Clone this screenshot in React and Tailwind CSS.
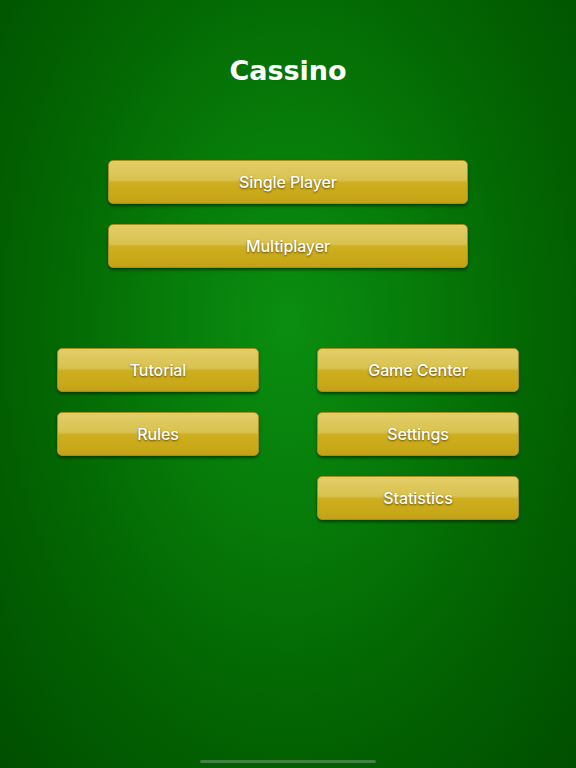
const font = { fontFamily: 'Inter, "Liberation Sans", Arial, sans-serif' }

function GoldButton({ label, wide }) {
  return (
    <button
      className={`${wide ? "w-[360px]" : "w-[202px]"} h-[44px] rounded-[5px] border border-[#a88f1c] bg-[linear-gradient(to_bottom,#e2cd68_0%,#d9c250_45%,#cdae1f_52%,#c9a818_85%,#c2a01a_100%)] shadow-[0_2px_3px_rgba(0,30,0,0.6)] text-white text-[16px] font-medium tracking-[-0.1px] [text-shadow:0_1px_2px_rgba(80,60,0,0.85)]`}
      style={font}
    >
      {label}
    </button>
  )
}

export default function App() {
  return (
    <div className="relative w-[576px] h-[768px] overflow-hidden bg-[radial-gradient(ellipse_at_50%_42%,#0a8e10_0%,#077c0a_30%,#036602_60%,#004e00_100%)]">
      <div className="flex flex-col items-center">
        <h1
          className="mt-[53px] text-white text-[27px] font-bold leading-[36px]"
          style={{ fontFamily: '"DejaVu Sans", Verdana, sans-serif' }}
        >
          Cassino
        </h1>
        <div className="mt-[71px] flex flex-col gap-[20px]">
          <GoldButton label="Single Player" wide />
          <GoldButton label="Multiplayer" wide />
        </div>
        <div className="mt-[80px] w-[462px] flex justify-between">
          <div className="flex flex-col gap-[20px]">
            <GoldButton label="Tutorial" />
            <GoldButton label="Rules" />
          </div>
          <div className="flex flex-col gap-[20px]">
            <GoldButton label="Game Center" />
            <GoldButton label="Settings" />
            <GoldButton label="Statistics" />
          </div>
        </div>
      </div>
      <div className="absolute left-[200px] top-[760px] w-[176px] h-[3px] rounded-full bg-[#5f8f5f]/70" />
    </div>
  )
}
